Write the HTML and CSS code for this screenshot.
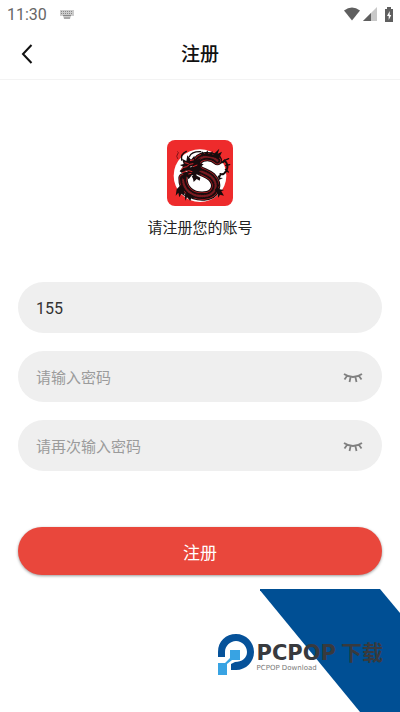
FILE: index.html
```
<!DOCTYPE html>
<html lang="zh-Hans">
<head>
  <meta charset="UTF-8">
  <meta name="viewport" content="width=device-width, initial-scale=1">
  <title>注册</title>
  <link rel="stylesheet" href="styles.css">
</head>
<body>

  <div class="status-bar">
    <span class="clock">11:30</span>
    <svg class="keyboard" viewBox="0 0 14 9" width="14" height="9">
      <path d="M0 0h14v6h-3l-1 3H4L3 6H0z" fill="#ccc"/>
      <path d="M1 1.5h12M1 3.5h12" stroke="#888" stroke-dasharray="1 1"/>
      <path d="M3 5.5h8M4 8h6" stroke="#888"/>
    </svg>
    <div class="status-icons">
      <svg viewBox="0 0 18 14" width="18" height="14"><path d="M1 3.5Q9-2.5 17 3.5L9 13.5z" fill="#5f5f5f"/></svg>
      <svg viewBox="0 0 14 14" width="14" height="14">
        <path d="M14 0v14H0z" fill="#c8c8c8"/>
        <path d="M8 6v8H0z" fill="#5f5f5f"/>
      </svg>
      <svg class="battery" viewBox="0 0 8 15" width="8" height="15">
        <path d="M2 0h4v2h2v13H0V2h2z" fill="#5f5f5f"/>
        <path d="M4.700 4L2 9h1.700v4L6.300 8H4.700z" fill="#fff"/>
      </svg>
    </div>
  </div>

  <header class="nav">
    <button class="back" type="button" aria-label="返回">
      <svg viewBox="0 0 12 20" width="12" height="20"><path d="M10.500 1L2 10l8.500 9" fill="none" stroke="#111" stroke-width="2"/></svg>
    </button>
    <h1>注册</h1>
  </header>

  <main>
    <svg class="logo" viewBox="35 30 198 198" width="66" height="66">
      <rect x="35" y="30" width="198" height="198" rx="24" fill="#ee2b2c"/>
      <circle cx="134" cy="137" r="79" fill="#fff"/>
      <!-- whiskers and tail -->
      <g fill="none" stroke="#160b0c" stroke-width="4" stroke-linecap="round">
        <path d="M67 86q-6-8 0-14 5-5 0-7" stroke="#7c1518" stroke-width="3"/>
        <path d="M79 90q-4-18 14-26M102 80q7-16 34-15"/>
        <path d="M186 94q14 8 22-2 14 12 5 30-8 14-18 10" stroke-width="6"/>
        <path d="M206 92l14-6M211 106l12-2M210 118l9 8M198 92l-3-11"/>
      </g>
      <!-- body -->
      <g fill="none" stroke-linecap="round" stroke-linejoin="round">
        <path d="M186 92C168 74 130 76 124 100C118 126 151 124 169 141C192 165 180 196 147 198C107 201 82 176 83 144" stroke="#150b0c" stroke-width="28"/>
        <path d="M186 92C168 74 130 76 124 100C118 126 151 124 169 141C192 165 180 196 147 198C107 201 82 176 83 144" stroke="#b81f26" stroke-width="22"/>
        <path d="M186 92C168 74 130 76 124 100C118 126 151 124 169 141C192 165 180 196 147 198C107 201 82 176 83 144" stroke="#1a0c0e" stroke-width="18"/>
        <path d="M186 92C168 74 130 76 124 100C118 126 151 124 169 141C192 165 180 196 147 198C107 201 82 176 83 144" stroke="#791a20" stroke-width="7" stroke-dasharray="2 5"/>
      </g>
      <!-- spines, legs and claws -->
      <g fill="#160b0c">
        <path d="M137 75l3-11 8 8 9-11 2 12 14-9-3 13 22-21-5 15 13-6-9 20z"/>
        <path d="M76 165l-12 13-3 19 8-9 3 14 6-11 10 8-3-24zM178 180l8 9 3 14 5-9 12 3-8-13 8-4-13-2-7-8zM94 188l-6 8 2 16 5-10 10 11 3-10 10 3-7-11z"/>
        <path d="M187 138l12-6-5 11 9 1-12 6zM185 165l10-3-6 8z"/>
      </g>
      <!-- head -->
      <path d="M73 124l10-14-9-5 11-3-5-16 13 7 3-17 11 13 10-12 3 15 16-7-4 14 13 4-10 8 9 10-13 2 6 11-13-2-2 11-12-8-10 13-6-9-12 11 2-18z" fill="#180b0d"/>
      <path d="M77 119q7-9 17-9l9-7 11-2M88 98l12 3M80 128l20-6 11 3M113 110l13-5M104 92l12-3M99 132l9-2" fill="none" stroke="#d9262b" stroke-width="3"/>
      <path d="M104 111l7-2M91 123l5 2" stroke="#eee" stroke-width="2"/>
      <path d="M109 139l13-3 13 7-2 9-9-5-9 9-2-10z" fill="#180b0d"/>
    </svg>
    <p class="tip">请注册您的账号</p>

    <form>
      <label class="field">
        <input type="text" value="155" aria-label="账号">
      </label>
      <div class="field">
        <input type="password" placeholder="请输入密码" aria-label="请输入密码">
        <button class="eye" type="button" aria-label="显示密码">
          <svg viewBox="0 0 20 10" width="20" height="10"><path d="M1 1Q10 7 19 1M4 3L1.500 6.500M7.500 4.500L6.500 9M12.500 4.500l1 4.500M16 3l2.500 3.500" fill="none" stroke="#808080" stroke-width="1.800"/></svg>
        </button>
      </div>
      <div class="field">
        <input type="password" placeholder="请再次输入密码" aria-label="请再次输入密码">
        <button class="eye" type="button" aria-label="显示密码">
          <svg viewBox="0 0 20 10" width="20" height="10"><path d="M1 1Q10 7 19 1M4 3L1.500 6.500M7.500 4.500L6.500 9M12.500 4.500l1 4.500M16 3l2.500 3.500" fill="none" stroke="#808080" stroke-width="1.800"/></svg>
        </button>
      </div>
      <button class="submit" type="button">注册</button>
    </form>
  </main>

  <footer class="banner">
    <svg class="stripe" viewBox="0 0 140 123" width="140" height="123"><path d="M-1 0H120L140 24V123H100z" fill="#004f94"/></svg>
    <div class="brand">
      <svg viewBox="0 0 36 41" width="36" height="41">
        <path d="M0 23V18C0 7 8 0 18 0S36 8 36 18 28 36 18 36H13V30L17 28C24 28 29 24 29 18S24 7 18 7 7 12 7 18V23z" fill="#06529a"/>
        <path d="M12 16H22V26H14L9 30V41H0V29H7L12 24z" fill="#38a3e3"/>
      </svg>
      <div>
        <div class="brand-name">PCPOP<span>下载</span></div>
        <div class="brand-sub">PCPOP Download</div>
      </div>
    </div>
  </footer>

</body>
</html>
```
FILE: styles.css
```
* {
  box-sizing: border-box;
}

body {
  margin: 0;
  min-height: 100vh;
  display: flex;
  flex-direction: column;
  background: #fff;
  color: #222;
  font-family: Roboto, "Noto Sans CJK SC", sans-serif;
  overflow-x: hidden;
}

button {
  padding: 0;
  border: none;
  background: none;
  font-family: inherit;
  cursor: pointer;
}

svg {
  display: block;
}

.status-bar {
  display: flex;
  align-items: center;
  height: 28px;
  padding: 0 7px;
  color: #666;
}

.clock {
  width: 53px;
  font-size: 16px;
}

.status-icons {
  display: flex;
  align-items: center;
  gap: 2px;
  margin-left: auto;
}

.battery {
  margin-left: 6px;
}

.nav {
  display: grid;
  grid-template-columns: 54px 1fr 54px;
  align-items: center;
  height: 52px;
  border-bottom: 1px solid #f3f3f3;
}

.nav h1 {
  margin: 0;
  padding-top: 2px;
  font-size: 19px;
  line-height: 28px;
  font-weight: 500;
  text-align: center;
  color: #111;
}

.back {
  display: flex;
  justify-content: center;
}

main {
  padding: 60px 18px 14px;
}

.logo {
  margin: 0 auto;
}

.tip {
  margin: 10px 0 42px;
  font-size: 15px;
  line-height: 24px;
  text-align: center;
}

form {
  display: flex;
  flex-direction: column;
  gap: 18px;
}

.field {
  display: flex;
  align-items: center;
  height: 51px;
  padding: 2px 19px 0 18px;
  border-radius: 26px;
  background: #efefef;
}

.field input {
  flex: 1;
  min-width: 0;
  padding: 0;
  border: none;
  outline: none;
  background: none;
  color: #333;
  font-family: inherit;
  font-size: 16px;
}

.field input::placeholder {
  color: #9b9b9b;
  font-size: 15px;
}

.submit {
  height: 48px;
  margin-top: 38px;
  border-radius: 24px;
  background: #e9473c;
  box-shadow: 0 1px 3px rgba(0, 0, 0, 0.4);
  color: #fff;
  font-size: 17px;
}

.banner {
  position: relative;
  display: flex;
  justify-content: flex-end;
  height: 123px;
  margin-top: auto;
  padding: 45px 17px 0 0;
}

.stripe {
  position: absolute;
  right: 0;
  top: 0;
}

.brand {
  position: relative;
  display: flex;
  gap: 3px;
}

.brand-name {
  margin-top: 9px;
  color: #383a3e;
  font: bold 21px/21px "DejaVu Sans", "Noto Sans CJK SC", sans-serif;
}

.brand-name span {
  margin-left: 5px;
}

.brand-sub {
  color: #777;
  font: 7px/8px "DejaVu Sans", sans-serif;
}
```
